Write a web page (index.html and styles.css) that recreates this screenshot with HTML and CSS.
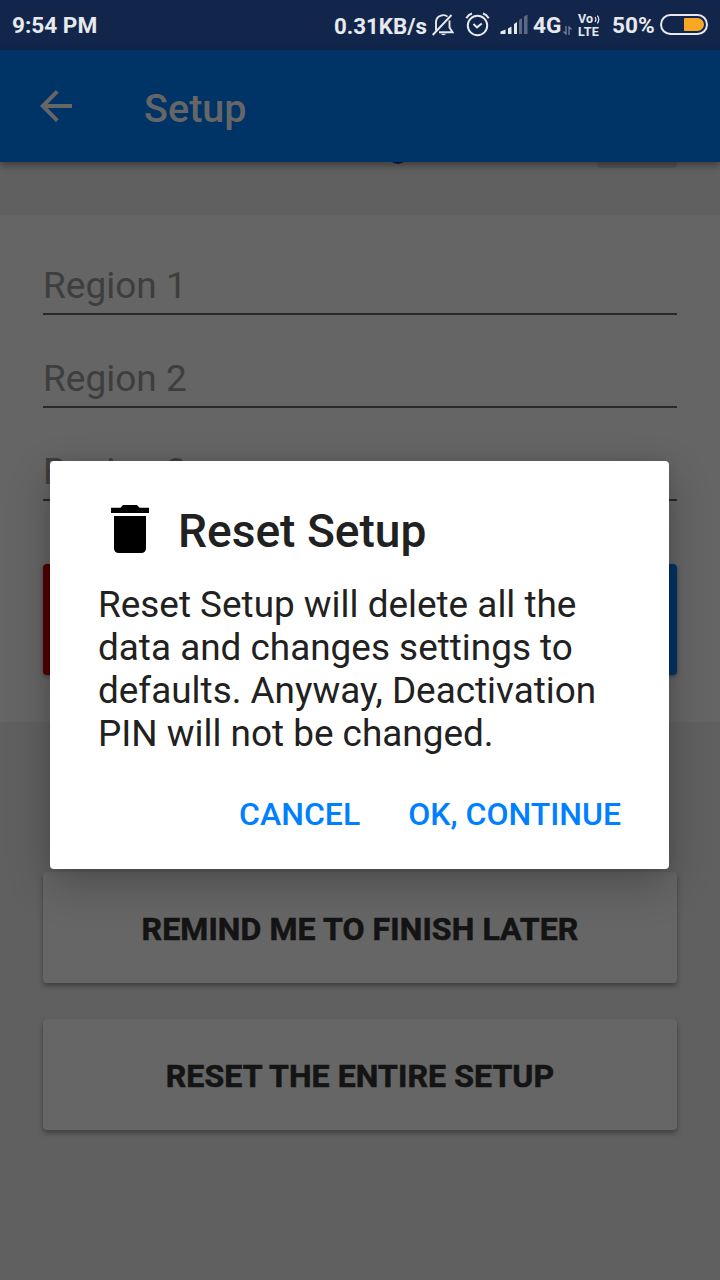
FILE: index.html
```html
<!DOCTYPE html>
<html lang="en">
<head>
<meta charset="utf-8">
<title>Setup</title>
<link rel="stylesheet" href="styles.css">
</head>
<body>
<div class="screen">
  <header class="status-bar">
    <span class="clock">9:54 PM</span>
    <div class="status-items">
      <span class="speed">0.31KB/s</span>
      <svg class="bell" width="22" height="24" viewBox="0 0 22 24" fill="none" stroke="#e7e9ed" stroke-width="1.9">
        <path d="M.7 22 19.500 2M4 17.500V9.200Q4.300 4.200 8.300 2.900Q12.500 1 15.500 3.600M17.500 7.500V14.500L20.500 19.200H7"/>
        <path d="M8.500 20.800Q11.500 23.500 14.500 20.800Z" fill="#e7e9ed" stroke="none"/>
      </svg>
      <svg class="alarm" width="25" height="25" viewBox="0 0 25 25" fill="none" stroke="#e7e9ed" stroke-width="2">
        <circle cx="12.500" cy="13.500" r="9.700"/>
        <path d="M8.500 12 12 15.400 16.800 11.500M1.300 6.200Q3.500 2.500 7 1.500M23.700 6.200Q21.500 2.500 18 1.500"/>
      </svg>
      <svg class="signal" width="28" height="21" viewBox="0 0 28 21">
        <path fill="#e7e9ed" d="M.5 20V17.500L5.500 15.500V20ZM8 20V14.500L11.500 12.500V20ZM14 20V10L17 8V20Z"/>
        <path fill="#5d6985" d="M19 20V6L22 4V20ZM24 20V2.500L27.500 .5V20Z"/>
      </svg>
      <span class="network">4G</span>
      <svg class="data" width="9" height="9" viewBox="0 0 9 9" fill="none" stroke="#77819a" stroke-width="1.300">
        <path d="M3 0V8L.5 5.500M6 9V1L8.500 3.500"/>
      </svg>
      <span class="volte"><span class="vo">Vo<svg width="6" height="9" viewBox="0 0 6 9" fill="none" stroke="#e7e9ed" stroke-width="1.200"><path d="M1 2Q2.800 4.500 1 7M3.300 .7Q6.300 4.500 3.300 8.300"/></svg></span><span class="lte">LTE</span></span>
      <span class="percent">50%</span>
      <span class="battery"><span class="charge"></span></span>
    </div>
  </header>
  <div class="app-bar">
    <svg class="back" width="32" height="32" viewBox="0 0 32 32" fill="none" stroke="#666" stroke-width="4"><path d="M32 16H4M17.300 1.400 2.800 16 17.300 30.600"/></svg>
    <h1>Setup</h1>
  </div>
  <main>
    <div class="scrolled-row"><span class="knob"></span><span class="chip"></span></div>
    <section class="form">
      <div class="field">Region 1</div>
      <div class="field">Region 2</div>
      <div class="field">Region 3</div>
      <div class="form-actions"><span class="discard"></span><span class="save"></span></div>
    </section>
    <section class="actions">
      <div class="button">REMIND ME TO FINISH LATER</div>
      <div class="button">RESET THE ENTIRE SETUP</div>
    </section>
  </main>
  <div class="dialog">
    <div class="dialog-title">
      <svg width="38" height="48" viewBox="0 0 38 48"><path d="M0 2.800H9.500L12 0H26L28.500 2.800H38V8H0ZM3 11H35V43Q35 48 30 48H8Q3 48 3 43Z"/></svg>
      <h2>Reset Setup</h2>
    </div>
    <p>Reset Setup will delete all the<br>data and changes settings to<br>defaults. Anyway, Deactivation<br>PIN will not be changed.</p>
    <div class="dialog-actions"><span>CANCEL</span><span>OK, CONTINUE</span></div>
  </div>
</div>
</body>
</html>
```
FILE: styles.css
```css
* { box-sizing: border-box; }
body { margin: 0; font-family: Roboto, sans-serif; }
h1, h2, p { margin: 0; font-weight: 500; }
svg { display: block; flex: none; }
.screen { position: relative; width: 720px; height: 1280px; overflow: hidden; background: #606060; }
.status-bar { display: flex; justify-content: space-between; height: 50px; padding: 0 12px; background: #12264c; color: #e7e9ed; font-size: 22.6px; font-weight: 700; line-height: 52px; white-space: nowrap; }
.status-items { display: flex; margin-right: -8px; padding-right: 8px; }
.speed { width: 92px; margin-right: 6px; font-size: 22.3px; }
.bell { margin: 13px 11px 0 0; }
.alarm { margin: 12px 10px 0 0; }
.signal { margin: 14px 5px 0 0; }
.network { width: 28px; margin-right: 2px; }
.data { margin: 26px 6px 0 0; }
.volte { display: grid; gap: 1px; align-content: start; width: 24px; margin-right: 10px; padding-top: 13px; font-size: 12.5px; line-height: 12px; }
.vo { display: flex; align-items: center; height: 12px; }
.vo svg { margin-left: 1px; }
.lte { height: 12px; font-size: 12.5px; letter-spacing: .3px; }
.percent { width: 42px; margin-right: 6px; }
.battery { display: flex; justify-content: flex-end; width: 48px; height: 21px; margin: 14px 0 0; padding: 2px; border: 2px solid #e7e9ed; border-radius: 11px; }
.charge { width: 20px; height: 13px; background: #f9a825; border-radius: 1px 7px 7px 1px; }
.app-bar { position: relative; z-index: 1; display: flex; align-items: center; height: 112px; padding-left: 40px; background: #003366; box-shadow: 0 3px 8px rgba(0,0,0,.4); }
.app-bar h1 { margin: 5px 0 0 72px; color: #666; font-size: 39.6px; line-height: 48px; }
.scrolled-row { display: flex; justify-content: flex-end; height: 53px; padding-right: 43px; }
.knob { width: 20px; height: 20px; margin: -18px 189px 0 0; border-radius: 50%; background: #101b48; }
.chip { width: 80px; height: 25px; margin-top: -19px; border-radius: 4px; background: #555; }
.form { height: 507px; padding: 30px 43px 0; background: #656565; }
.field { height: 70px; margin-bottom: 23px; padding-top: 18px; border-bottom: 2px solid #292929; color: #3e3e3e; font-size: 37px; line-height: 46px; }
.form-actions { display: flex; justify-content: space-between; padding-top: 40px; }
.discard, .save { width: 307px; height: 111px; border-radius: 4px; background: #520000; box-shadow: 0 2px 4px rgba(0,0,0,.3); }
.save { background: #003366; }
.actions { display: grid; gap: 36px; padding: 150px 43px 0; }
.button { display: flex; align-items: center; justify-content: center; height: 111px; padding-top: 3px; border-radius: 4px; background: #666; box-shadow: 0 3px 5px rgba(0,0,0,.35); color: #141414; font-size: 32px; font-weight: 700; letter-spacing: .1px; -webkit-text-stroke: .6px #141414; }
.dialog { position: absolute; z-index: 2; top: 461px; left: 50px; width: 619px; height: 408px; padding: 44px 48px 0; border-radius: 4px; background: #fff; color: #212121; box-shadow: 0 16px 44px rgba(0,0,0,.24), 0 0 12px rgba(0,0,0,.1); }
.dialog-title { display: flex; padding-left: 13px; }
.dialog-title h2 { margin-left: 29px; font-size: 46.1px; line-height: 53px; }
.dialog p { margin-top: 25px; font-size: 36.9px; font-weight: 400; line-height: 43px; white-space: nowrap; }
.dialog-actions { display: flex; justify-content: flex-end; gap: 48px; margin-top: 38px; color: #0080ff; font-size: 32px; font-weight: 500; line-height: 42px; }
```
